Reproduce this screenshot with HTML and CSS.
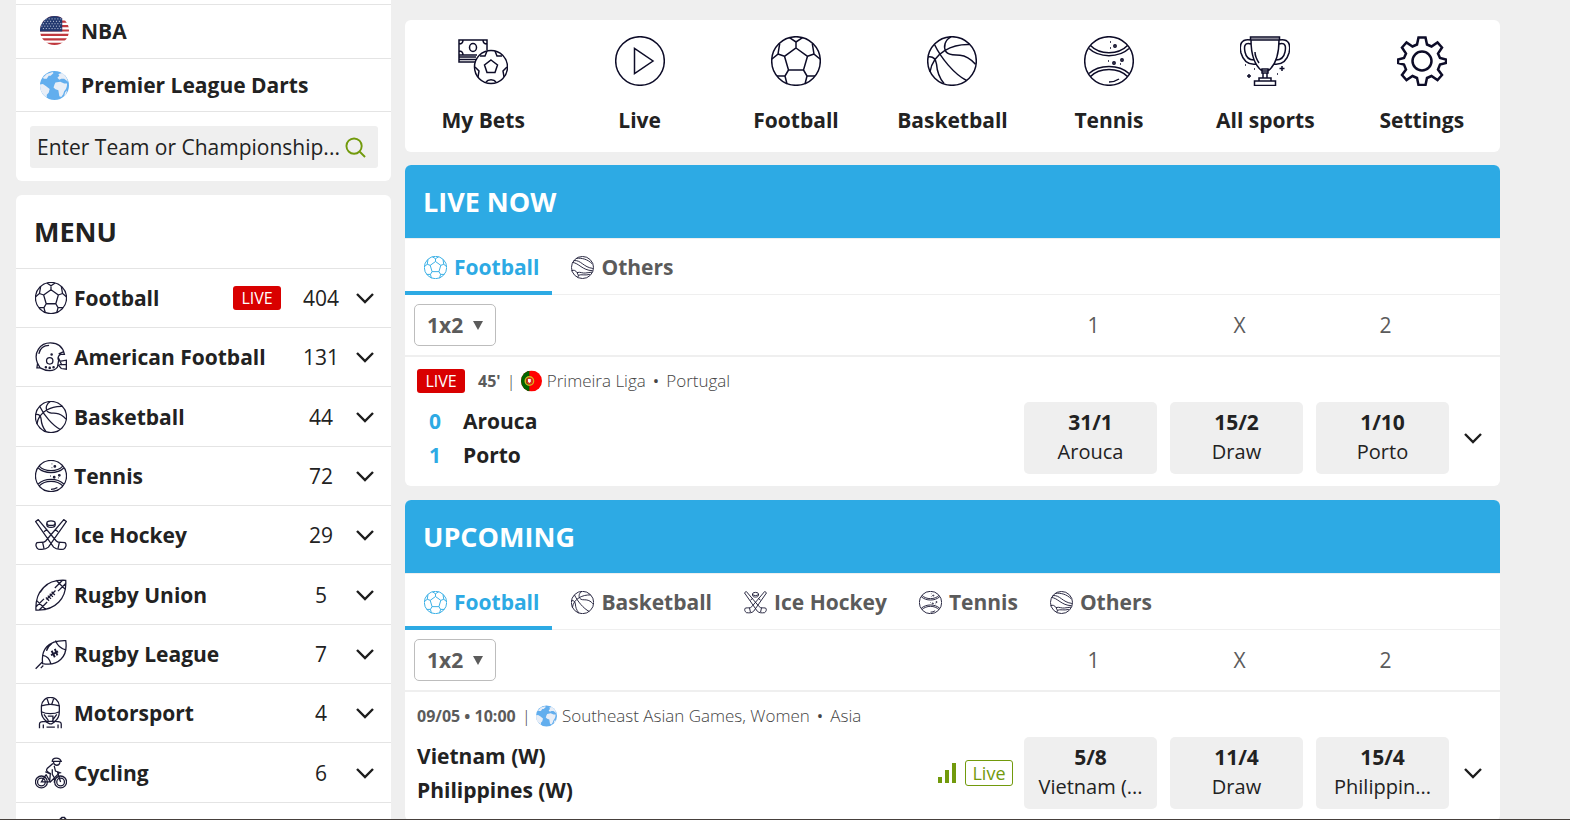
FILE: index.html
```html
<!DOCTYPE html>
<html lang="en">
<head>
<meta charset="utf-8">
<title>Sports betting</title>
<link rel="stylesheet" href="styles.css">
</head>
<body>
<svg class="sprite" aria-hidden="true">
  <symbol id="i-football" viewBox="0 0 50 50">
    <circle cx="25" cy="25" r="24.3"/>
    <path d="M25 12l11.5 8.3-4 13.7h-15l-4-13.7zM25 12V6M18.500 1.700L25 6l6.500-4.300M36.500 20.300L43 18M41.300 7.600L43 18l6 5M13.500 20.300L7 18M8.700 7.600L7 18l-6 5M32.500 34l3.500 6M44 40h-8l-2 8M17.500 34L14 40M6 40h8l2 8"/>
  </symbol>
  <symbol id="i-basketball" viewBox="0 0 50 50">
    <circle cx="25" cy="25" r="24.3"/>
    <path d="M24 .8c-6 3-8 10-5 15 3 4 8 3 14 3.500 6 .5 11 4 15.500 9M42.500 8.500C26 8 6 16 3 36M7.500 8.500C14 22 27 38 39.500 44.500M1 21c6-1 8 3 8.500 7 .5 7 2 13 7.500 19.500"/>
  </symbol>
  <symbol id="i-tennis" viewBox="0 0 50 50">
    <circle cx="25" cy="25" r="24.300"/>
    <path d="M6.500 9.500c9 9.500 28 9.500 37 0M5 12.500c10 9.500 30 9.500 40 0M6.500 40.500c9-9.500 28-9.500 37 0M5 37.500c10-9.500 30-9.500 40 0M25 46c4 0 7-1 10-3"/>
    <circle cx="31" cy="10" r="1.200"/><circle cx="38" cy="24" r="1.200"/><circle cx="30" cy="27" r="1.200"/>
    <path d="M26 6h1M26 12h1M24 25h1M36 28h1"/>
  </symbol>
  <symbol id="i-volley" viewBox="0 0 50 50">
    <circle cx="25" cy="25" r="24"/>
    <path d="M12 5c12-1 24 2 34 12M6 10c16-2 21 15 42 17M3 14c14 1 21 17 44 18M1 32c5-2 9-1 12 4 8-2 12 2 18 1 6 0 10-2 15-2M13 36l3 6c7-3 13 1 25-2M16 42l-1 5"/>
  </symbol>
  <symbol id="i-hockey" viewBox="0 0 50 50">
    <ellipse cx="25" cy="6.500" rx="6.500" ry="3.500"/>
    <path d="M18.500 6.500v3c0 5 13 5 13 0v-3M1 4l4-3 28 33c3 4 9 2 14 3 3 3 1 8-2 10-6 1-12 1-16-3L1 4zM49 4l-4-3-28 33c-3 4-9 2-14 3-3 3-1 8 2 10 6 1 12 1 16-3L49 4zM14 20l5-4M36 20l-5-4M12 37l2 9M38 37l-2 9"/>
  </symbol>
  <symbol id="i-helmet" viewBox="0 0 50 50">
    <path d="M4 35C-3 18 8 3 24 3c13 0 20 8 22 18h-6c-4 2-5 6-3 9l-2 11c-6 8-18 6-27 1L4 35zM4 35l-1 7h6M6 20C8 11 14 7 22 7M37 20l7-3M36 25l6 13M38 32l11-2v14l-8-1-5-6M38 37h11"/>
    <circle cx="23" cy="31" r="5"/><circle cx="26" cy="21" r="1"/><circle cx="17" cy="41" r="1"/><circle cx="23" cy="42" r="1"/><circle cx="29" cy="41" r="1"/>
  </symbol>
  <symbol id="i-rugby" viewBox="0 0 50 50">
    <path d="M1.500 48.500C0 20 17 0 48 2c2 28-16 48-46.500 46.500zM2 33l15 15M2 43l12-12M7 48l12-12M33 2l15 15M43 2L31 14M48 7L36 19M18 32l14-14M17 29l5 5M20 26l5 5M23 23l5 5M26 20l5 5M8 21c3-6 7-10 12-13"/>
  </symbol>
  <symbol id="i-league" viewBox="0 0 50 50">
    <path d="M12 40C9 19 20 3 48 4c4 25-12 41-36 36zM12 27c7 1 11 5 13 14M32 4c3 8 8 13 17 15M18 20c1-5 4-8 8-11M1 48l10-10M9 47l4-4"/>
    <path stroke-width="3" d="M25 27l11-6M26 20l5 10M31 17l4 10"/>
  </symbol>
  <symbol id="i-motor" viewBox="0 0 50 50">
    <path d="M10 14C12-4 36-4 38 14v9c0 8-3 12-7 15H18c-4-3-8-7-8-15zM10 14c8-3 20-3 28 0v9c-8 4-20 4-28 0zM19 3l3 9M29 3l-3 9M14 27l7 10M34 27l-7 10M20 30h8v8M7 49v-7c0-3 4-4 9-4M41 49v-7c0-3-4-4-9-4M16 38l7 4h3l6-4M13 49v-6M36 49v-6M18 47h13"/>
  </symbol>
  <symbol id="i-cycling" viewBox="0 0 50 50">
    <circle cx="10" cy="39" r="9.300"/><circle cx="10" cy="39" r="6"/><circle cx="40" cy="39" r="9.300"/><circle cx="40" cy="39" r="6"/>
    <path d="M27 7c0-7 12-7 14 0zM29 8c0 6 9 7 10 0M28 10l-9 8c-3 4 2 6 5 8l-1 11M30 14l2 8 9 3M27 19v8l4 7-1 6M16 23l7 3M17 27l7 12 14-14M17 28l-7 11h14M35 23l5 16"/>
  </symbol>
  <symbol id="i-bets" viewBox="0 0 50 50">
    <path d="M19 19H1V4h28v10M1 4v22h16M1 21h17M1 23.500h17M1 8c2.500 0 4-1.500 4-4M25 4c0 2.500 1.500 4 4 4M1 15c2.500 0 4 1.500 4 4"/>
    <ellipse cx="15" cy="11.500" rx="3.500" ry="4"/><circle cx="33" cy="31" r="16.500"/>
    <path d="M33 24l6.500 5-2.500 7.500h-8L26.500 29zM22 20h5l2-5M44 20h-5l-2-5M17 31l4 4-1 6M49 31l-4 4 1 6M28 46c2-3 8-3 10 0"/>
  </symbol>
  <symbol id="i-live" viewBox="0 0 50 50"><circle cx="25" cy="25" r="24.300"/><path d="M19.500 12.500v25L38 25z"/></symbol>
  <symbol id="i-trophy" viewBox="0 0 50 50">
    <path d="M10.500 1h29v3h-29zM11 4c0 13 2 24 11 31h6c9-7 11-18 11-31M11 4C1 2-1 9 1 17c2 7 7 12 15 11M11 8C4 6 4 11 5 16c1 5 4 8 9 8M39 4c10-2 12 5 10 13-2 7-7 12-15 11M39 8c7-2 7 3 6 8-1 5-4 8-9 8M15 16c0 5 2 8 4 11M22 33h6v4h-6zM23 37v5h4v-5M19 42h12v3H19zM14.500 45h21v4.500h-21zM42 30v5M39.500 32.500h5M9 38v4M7 40h4M5 29h1M14 33h1M37 38h1"/>
    <path d="M10.500 2.500h29" opacity=".5"/>
  </symbol>
  <symbol id="i-gear" viewBox="0 0 50 50">
    <circle cx="25" cy="25" r="9.500"/>
    <path d="M21.500 1.500h7l1.500 7 4.500 2 6-4 4.500 5-4 6 2 4.500 6 1.500v3.500l-6 1.500-2 5 4 5.500-4.500 5-6-4-4.500 2-1.500 7h-7l-1.500-7-4.500-2-6 4-4.500-5 4-5.500-2-5-6-1.500v-3.500l6-1.500 2-4.500-4-6 4.500-5 6 4 4.500-2z"/>
  </symbol>
  <symbol id="i-chevron" viewBox="0 0 18 12"><path d="M1 2l8 8 8-8"/></symbol>
  <symbol id="i-peak" viewBox="0 0 50 50"><path d="M37 7l5-5h4l4 5M42 4v8M46 4v8"/></symbol>
  <symbol id="i-globe" viewBox="0 0 30 30">
    <circle cx="15" cy="15" r="15" fill="#62aeee"/>
    <path fill="#e8eef7" d="M15 14l1-2 5-1 4 2 3 0c0 4-1 6-3 8l-1 3-2 3-2-1-1-6-3-1-2-2zM0 14l3-.5 3 2 4 3-1 4-2 2v3C2 24 0 20 0 14zM3 7l4-4 6-2 1 1-3 3H9L7 8H4zM18 7l2-2-1-2 4-1c3 2 5 5 6 9l-4-3h-3l-2 1zM26 22l2-2-1 4-2 2z"/>
  </symbol>
  <symbol id="i-usa" viewBox="0 0 30 30">
    <clipPath id="disc"><circle cx="15" cy="15" r="15"/></clipPath>
    <g clip-path="url(#disc)">
      <path fill="#fff" d="M0 0h30v30H0z"/>
      <path stroke="#c0393f" stroke-width="2.300" d="M0 1.200h30M0 5.800h30M0 10.400h30M0 15h30M0 19.600h30M0 24.200h30M0 28.800h30"/>
      <path fill="#243a70" d="M0 0h23v16H0z"/>
      <path stroke="#d5dbea" stroke-width="1" stroke-dasharray="1 2" d="M3 3h20M1.500 5.500h21M3 8h20M1.500 10.500h21M3 13h20"/>
    </g>
  </symbol>
  <symbol id="i-portugal" viewBox="0 0 30 30">
    <g clip-path="url(#disc)">
      <path fill="#f00" d="M0 0h30v30H0z"/><path fill="#060" d="M0 0h12v30H0z"/>
      <circle cx="12" cy="15" r="6" fill="none" stroke="#d8b020" stroke-width="2"/><circle cx="12" cy="15" r="4.500" fill="#d83020"/>
      <path fill="#fff" d="M10 12h4v4l-2 2-2-2z"/>
    </g>
  </symbol>
</svg>

<div class="page">
  <aside class="sidebar">
    <section class="card leagues">
      <a class="league" href="#nba"><svg class="flag-lg"><use href="#i-usa"/></svg>NBA</a>
      <a class="league" href="#darts"><svg class="flag-lg"><use href="#i-globe"/></svg>Premier League Darts</a>
      <form class="search">
        <input type="text" aria-label="Search team or championship" placeholder="Enter Team or Championship...">
        <button type="submit" aria-label="Search"><svg viewBox="0 0 22 22"><circle cx="9.500" cy="9.500" r="8"/><path d="M15.500 15.500l5.500 5.500"/></svg></button>
      </form>
    </section>

    <nav class="card menu">
      <h2>MENU</h2>
      <ul>
        <li><a href="#football"><svg class="ico"><use href="#i-football"/></svg><span class="name">Football</span><span class="live">LIVE</span><span class="count">404</span><svg class="chev"><use href="#i-chevron"/></svg></a></li>
        <li><a href="#american"><svg class="ico"><use href="#i-helmet"/></svg><span class="name">American Football</span><span class="count">131</span><svg class="chev"><use href="#i-chevron"/></svg></a></li>
        <li><a href="#basketball"><svg class="ico"><use href="#i-basketball"/></svg><span class="name">Basketball</span><span class="count">44</span><svg class="chev"><use href="#i-chevron"/></svg></a></li>
        <li><a href="#tennis"><svg class="ico"><use href="#i-tennis"/></svg><span class="name">Tennis</span><span class="count">72</span><svg class="chev"><use href="#i-chevron"/></svg></a></li>
        <li><a href="#hockey"><svg class="ico"><use href="#i-hockey"/></svg><span class="name">Ice Hockey</span><span class="count">29</span><svg class="chev"><use href="#i-chevron"/></svg></a></li>
        <li><a href="#union"><svg class="ico"><use href="#i-rugby"/></svg><span class="name">Rugby Union</span><span class="count">5</span><svg class="chev"><use href="#i-chevron"/></svg></a></li>
        <li><a href="#league"><svg class="ico"><use href="#i-league"/></svg><span class="name">Rugby League</span><span class="count">7</span><svg class="chev"><use href="#i-chevron"/></svg></a></li>
        <li><a href="#motor"><svg class="ico"><use href="#i-motor"/></svg><span class="name">Motorsport</span><span class="count">4</span><svg class="chev"><use href="#i-chevron"/></svg></a></li>
        <li><a href="#cycling"><svg class="ico"><use href="#i-cycling"/></svg><span class="name">Cycling</span><span class="count">6</span><svg class="chev"><use href="#i-chevron"/></svg></a></li>
        <li><a href="#more" aria-label="More sports"><svg class="ico"><use href="#i-peak"/></svg></a></li>
      </ul>
    </nav>
  </aside>

  <main class="main">
    <nav class="card shortcuts">
      <a href="#bets"><svg><use href="#i-bets"/></svg>My Bets</a>
      <a href="#live"><svg><use href="#i-live"/></svg>Live</a>
      <a href="#football"><svg><use href="#i-football"/></svg>Football</a>
      <a href="#basketball"><svg><use href="#i-basketball"/></svg>Basketball</a>
      <a href="#tennis"><svg><use href="#i-tennis"/></svg>Tennis</a>
      <a href="#all"><svg><use href="#i-trophy"/></svg>All sports</a>
      <a href="#settings"><svg class="bold"><use href="#i-gear"/></svg>Settings</a>
    </nav>

    <section class="card board">
      <h2>LIVE NOW</h2>
      <div class="tabs">
        <button class="tab active"><svg><use href="#i-football"/></svg>Football</button>
        <button class="tab"><svg><use href="#i-volley"/></svg>Others</button>
      </div>
      <div class="filter">
        <div class="market"><select aria-label="Market"><option>1x2</option></select><svg viewBox="0 0 10 9"><path d="M0 0h10L5 9z"/></svg></div>
        <span class="col">1</span><span class="col">X</span><span class="col">2</span>
      </div>
      <article class="event">
        <div class="meta"><span class="live">LIVE</span><b class="minute">45'</b><i>|</i><svg class="flag"><use href="#i-portugal"/></svg><span>Primeira Liga</span><i class="dot">•</i><span>Portugal</span></div>
        <div class="row">
          <div class="teams scored">
            <span class="score">0</span><span>Arouca</span>
            <span class="score">1</span><span>Porto</span>
          </div>
          <button class="odd"><b>31/1</b><span>Arouca</span></button>
          <button class="odd"><b>15/2</b><span>Draw</span></button>
          <button class="odd"><b>1/10</b><span>Porto</span></button>
          <button class="more" aria-label="More markets"><svg class="chev"><use href="#i-chevron"/></svg></button>
        </div>
      </article>
    </section>

    <section class="card board">
      <h2>UPCOMING</h2>
      <div class="tabs">
        <button class="tab active"><svg><use href="#i-football"/></svg>Football</button>
        <button class="tab"><svg><use href="#i-basketball"/></svg>Basketball</button>
        <button class="tab"><svg><use href="#i-hockey"/></svg>Ice Hockey</button>
        <button class="tab"><svg><use href="#i-tennis"/></svg>Tennis</button>
        <button class="tab"><svg><use href="#i-volley"/></svg>Others</button>
      </div>
      <div class="filter">
        <div class="market"><select aria-label="Market"><option>1x2</option></select><svg viewBox="0 0 10 9"><path d="M0 0h10L5 9z"/></svg></div>
        <span class="col">1</span><span class="col">X</span><span class="col">2</span>
      </div>
      <article class="event">
        <div class="meta"><b>09/05 • 10:00</b><i>|</i><svg class="flag"><use href="#i-globe"/></svg><span>Southeast Asian Games, Women</span><i class="dot">•</i><span>Asia</span></div>
        <div class="row">
          <div class="teams"><span>Vietnam (W)</span><span>Philippines (W)</span></div>
          <svg class="stats" viewBox="0 0 18 20"><path d="M0 14h4v6H0zM7 7h4v13H7zM14 0h4v20h-4z"/></svg>
          <span class="soon">Live</span>
          <button class="odd"><b>5/8</b><span>Vietnam (...</span></button>
          <button class="odd"><b>11/4</b><span>Draw</span></button>
          <button class="odd"><b>15/4</b><span>Philippin...</span></button>
          <button class="more" aria-label="More markets"><svg class="chev"><use href="#i-chevron"/></svg></button>
        </div>
      </article>
    </section>
  </main>
</div>
</body>
</html>
```
FILE: styles.css
```css
* { box-sizing: border-box; }

body {
  margin: 0;
  height: 100vh;
  overflow: hidden;
  background: #efefef;
  border-bottom: 1px solid #46403c;
  color: #222;
  font-family: "Open Sans", "Noto Sans", sans-serif;
  font-size: 21px;
  line-height: 30px;
}

button, input, select { font: inherit; color: inherit; border: 0; background: none; padding: 0; margin: 0; }
button { cursor: pointer; }
a { color: inherit; text-decoration: none; }
h2, ul { margin: 0; padding: 0; list-style: none; }
i { font-style: normal; }
.sprite { position: absolute; width: 0; height: 0; }
svg { display: block; flex: none; }

.page { display: flex; gap: 14px; height: 100%; overflow: hidden; padding: 0 70px 0 16px; }
.sidebar { width: 375px; flex: none; display: flex; flex-direction: column; gap: 14px; }
.main { flex: 1; min-width: 0; padding-top: 20px; display: flex; flex-direction: column; gap: 14px; }
.card { background: #fff; border-radius: 6px; overflow: hidden; flex: none; }

/* leagues */
.leagues { border-radius: 0 0 6px 6px; padding-top: 4px; }
.league {
  display: flex; align-items: center; gap: 12px;
  height: 54px; padding: 0 0 2px 24px;
  border-top: 1px solid #e4e4e4;
  font-weight: 700;
}
.league + .league { height: 53px; padding-bottom: 0; }
.flag-lg { width: 29px; height: 29px; }
.search {
  display: flex; align-items: center;
  border-top: 1px solid #e4e4e4;
  padding: 14px 13px 13px 14px;
}
.search input {
  flex: 1; min-width: 0; height: 42px; padding-left: 7px;
  background: #efefef; border-radius: 3px 0 0 3px;
}
.search input::placeholder { color: #222; opacity: 1; }
.search button { height: 42px; padding: 0 12px 0 5px; background: #efefef; border-radius: 0 3px 3px 0; }
.search svg { width: 21px; height: 21px; fill: none; stroke: #729a0c; stroke-width: 2; }

/* sport menu */
.menu h2 { font-size: 27px; line-height: 73px; font-weight: 700; padding-left: 18px; }
.menu li { height: 59px; border-top: 1px solid #e4e4e4; }
.menu li:nth-child(3n) { height: 60px; }
.menu a { display: flex; align-items: center; height: 100%; padding: 0 17px 0 19px; }
.ico { width: 32px; height: 32px; fill: none; stroke: #1b1a35; stroke-width: 2; margin-right: 7px; }
.name { flex: 1; font-weight: 700; }
.count { width: 60px; text-align: center; margin-right: 5px; }
.live {
  width: 48px; height: 24px; border-radius: 3px;
  background: #d90000; color: #fff;
  font-size: 16px; line-height: 24px; text-align: center;
}
.menu .live { margin-right: 10px; }
.chev { width: 18px; height: 12px; fill: none; stroke: #1d1d1d; stroke-width: 2.400; }

/* shortcuts */
.shortcuts { display: grid; grid-template-columns: repeat(7, 1fr); padding: 16px 0 17px; margin-bottom: -1px; font-weight: 700; }
.shortcuts a { display: flex; flex-direction: column; align-items: center; gap: 19px; }
.shortcuts svg { width: 50px; height: 50px; fill: none; stroke: #0d0c28; stroke-width: 1.500; }
.shortcuts .bold { stroke-width: 2.500; }

/* boards */
.board h2 { height: 73px; padding-left: 18px; background: #2daae4; color: #fff; font-size: 27px; line-height: 73px; font-weight: 700; }
.tabs { display: flex; height: 57px; border-top: 1px solid #efefef; border-bottom: 1px solid #efefef; }
.tab {
  display: flex; align-items: center; gap: 7px;
  height: 56px; padding: 4px 13px 0 19px;
  border-bottom: 4px solid transparent;
  color: #5b5b5b; font-weight: 700;
}
.tab svg { width: 23px; height: 23px; fill: none; stroke: #1b1a35; stroke-width: 2; }
.tab.active { color: #2daae4; border-color: #2daae4; }
.tab.active svg { stroke: #2daae4; }
.filter { display: flex; align-items: center; gap: 13px; height: 62px; padding: 0 48px 0 9px; border-bottom: 2px solid #efefef; color: #5b5b5b; }
.market { display: grid; align-items: center; margin-right: auto; }
.market > * { grid-area: 1 / 1; }
.market select { appearance: none; width: 82px; height: 42px; padding-left: 12px; border: 1px solid #bdbdbd; border-radius: 5px; font-weight: 700; }
.market svg { width: 10px; height: 9px; fill: #5b5b5b; justify-self: end; margin-right: 13px; pointer-events: none; }
.col { width: 133px; text-align: center; }

.event { padding: 12px 0 12px 12px; }
.meta { display: flex; align-items: center; height: 24px; margin-bottom: 9px; color: #444; font-size: 17px; font-weight: 300; gap: 5px; }
.meta b { color: #5b5b5b; font-size: 16px; font-weight: 700; margin-right: 1px; }
.meta .live { font-weight: 400; color: #fff; }
.meta .minute { margin-left: 8px; }
.flag { width: 21px; height: 22px; }
.dot { margin: 0 2px; font-weight: 400; }
.row { display: flex; align-items: center; gap: 13px; }
.teams { display: grid; line-height: 34px; margin-right: auto; font-weight: 700; }
.scored { grid-template-columns: 36px auto; column-gap: 10px; }
.score { text-align: center; color: #2daae4; }
.odd { width: 133px; height: 72px; padding: 6px 14px; border-radius: 5px; background: #efefef; line-height: 28px; }
.odd b, .odd span { display: block; overflow: hidden; white-space: nowrap; text-overflow: ellipsis; }
.odd b { font-weight: 700; }
.odd span { font-size: 20px; line-height: 32px; }
.more { width: 38px; padding-left: 2px; }
.stats { width: 18px; height: 20px; fill: #729a0c; margin-right: -4px; }
.soon { width: 48px; height: 26px; margin-right: -2px; border: 1px solid #729a0c; border-radius: 3px; color: #729a0c; font-size: 18px; line-height: 24px; text-align: center; }
```
